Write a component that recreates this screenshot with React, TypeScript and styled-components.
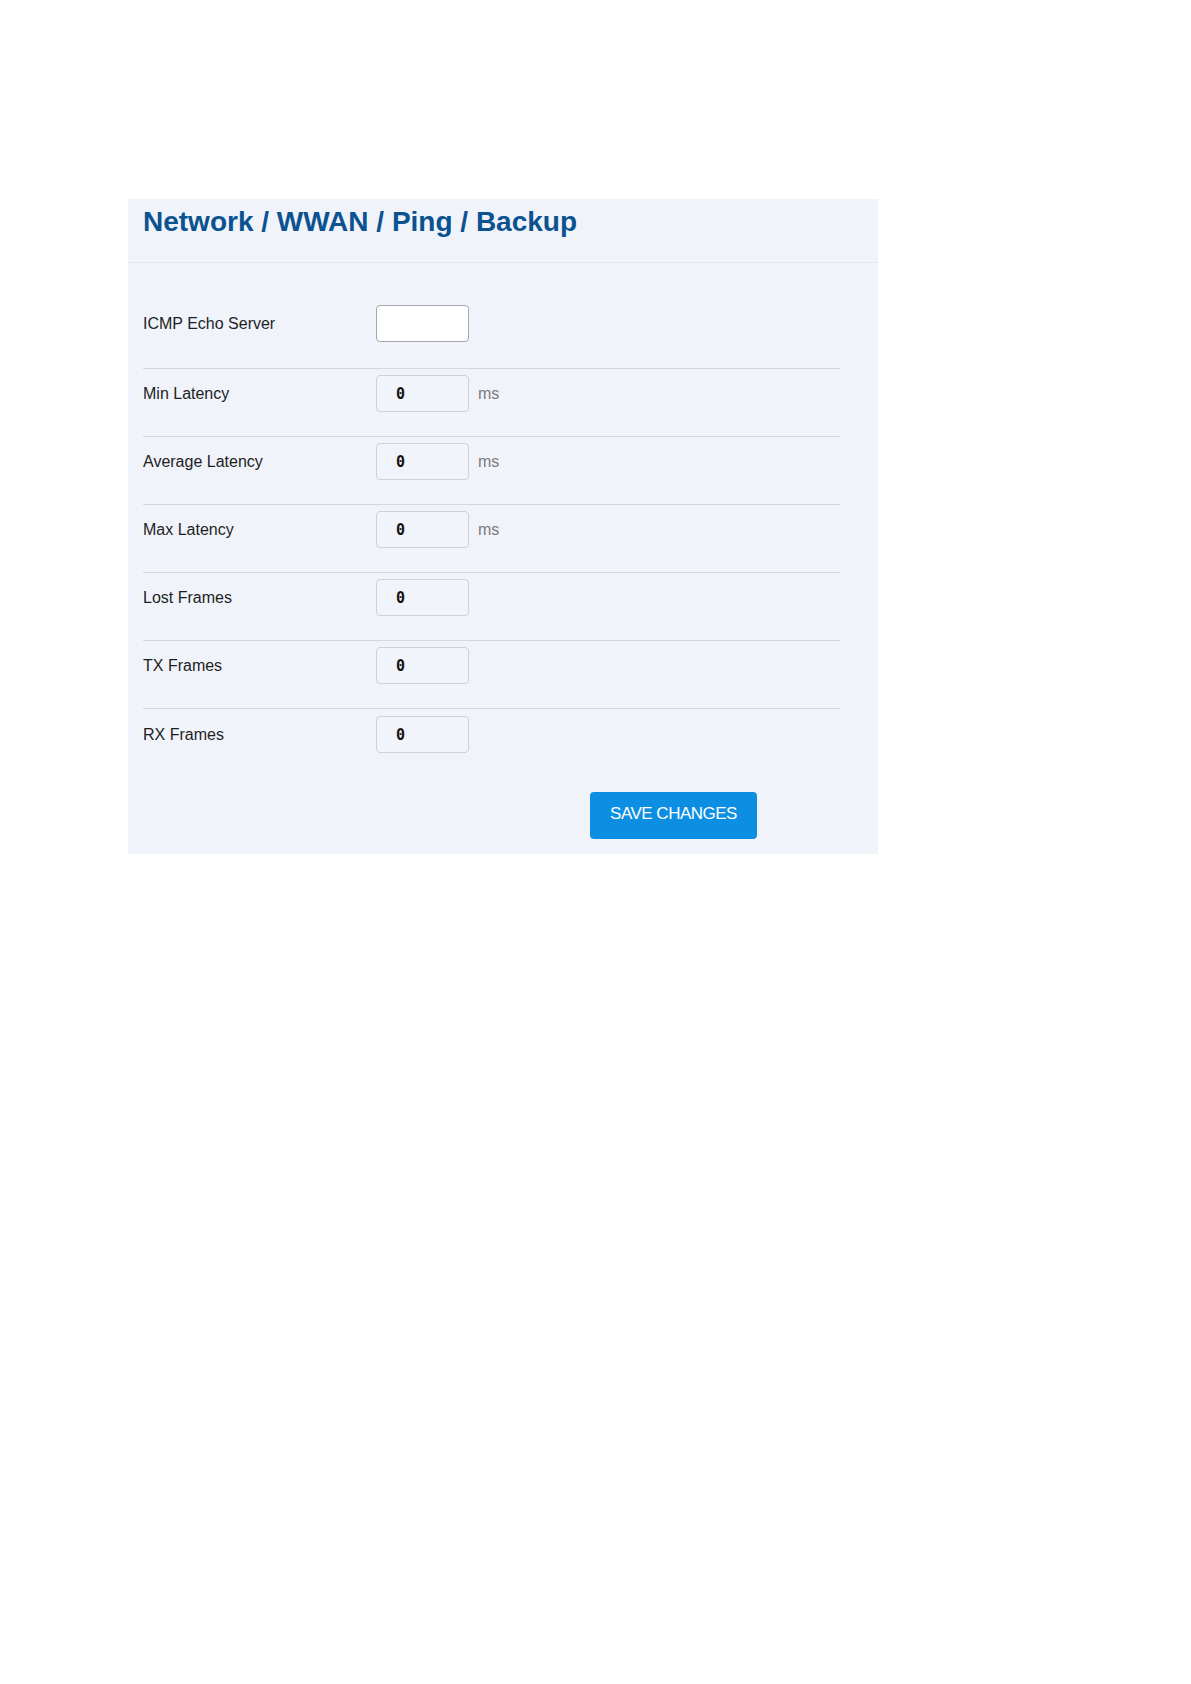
import React from "react";
import styled, { createGlobalStyle } from "styled-components";

const GlobalStyle = createGlobalStyle`
  body {
    margin: 0;
    background: #ffffff;
    font-family: "Liberation Sans", Arial, sans-serif;
  }
`;

const Page = styled.div`
  padding: 199px 0 0 128px;
  min-height: 1684px;
  box-sizing: border-box;
`;

const Panel = styled.section`
  width: 750px;
  background: #f0f3fa;
`;

const Header = styled.div`
  padding: 7px 15px 24px;
  border-bottom: 1px solid #e2e6ee;
`;

const Title = styled.h2`
  margin: 0;
  font-size: 28px;
  line-height: 32px;
  font-weight: 700;
  color: #0b5291;
`;

const Body = styled.div`
  padding: 0 38px 15px 15px;
`;

const Row = styled.div<{ $first?: boolean; $last?: boolean }>`
  display: flex;
  align-items: center;
  padding: ${(p) => (p.$first ? "42px 0 26px" : p.$last ? "7px 0 0" : "6px 0 24px")};
  border-bottom: ${(p) => (p.$last ? "none" : "1px solid #d3d7de")};
`;

const Label = styled.label`
  width: 233px;
  flex-shrink: 0;
  font-size: 16px;
  color: #1e1e1e;
`;

const Field = styled.input<{ $editable?: boolean }>`
  box-sizing: border-box;
  width: 93px;
  height: 37px;
  padding: 0 0 0 19px;
  border: 1px solid ${(p) => (p.$editable ? "#a3a8b0" : "#cdd1d8")};
  border-radius: 4px;
  background: ${(p) => (p.$editable ? "#ffffff" : "#f1f4fa")};
  font-family: "DejaVu Sans Mono", "Liberation Mono", monospace;
  font-size: 15px;
  font-weight: 700;
  color: #111;
  outline: none;
`;

const Unit = styled.span`
  margin-left: 9px;
  font-size: 16px;
  color: #7a7a7a;
`;

const Actions = styled.div`
  padding: 39px 0 0 447px;
`;

const SaveButton = styled.button`
  width: 167px;
  height: 47px;
  padding: 0 0 3px;
  border: none;
  border-radius: 4px;
  background: #0c8fe2;
  color: #ffffff;
  font-family: "Liberation Sans", Arial, sans-serif;
  font-size: 17px;
  letter-spacing: -0.5px;
  cursor: pointer;
`;

type Stat = { label: string; unit?: string };

const stats: Stat[] = [
  { label: "Min Latency", unit: "ms" },
  { label: "Average Latency", unit: "ms" },
  { label: "Max Latency", unit: "ms" },
  { label: "Lost Frames" },
  { label: "TX Frames" },
  { label: "RX Frames" },
];

export default function App() {
  return (
    <>
      <GlobalStyle />
      <Page>
        <Panel>
          <Header>
            <Title>Network / WWAN / Ping / Backup</Title>
          </Header>
          <Body>
            <Row $first>
              <Label>ICMP Echo Server</Label>
              <Field $editable type="text" defaultValue="" />
            </Row>
            {stats.map((s, i) => (
              <Row key={s.label} $last={i === stats.length - 1}>
                <Label>{s.label}</Label>
                <Field type="text" value="0" readOnly />
                {s.unit && <Unit>{s.unit}</Unit>}
              </Row>
            ))}
            <Actions>
              <SaveButton>SAVE CHANGES</SaveButton>
            </Actions>
          </Body>
        </Panel>
      </Page>
    </>
  );
}
